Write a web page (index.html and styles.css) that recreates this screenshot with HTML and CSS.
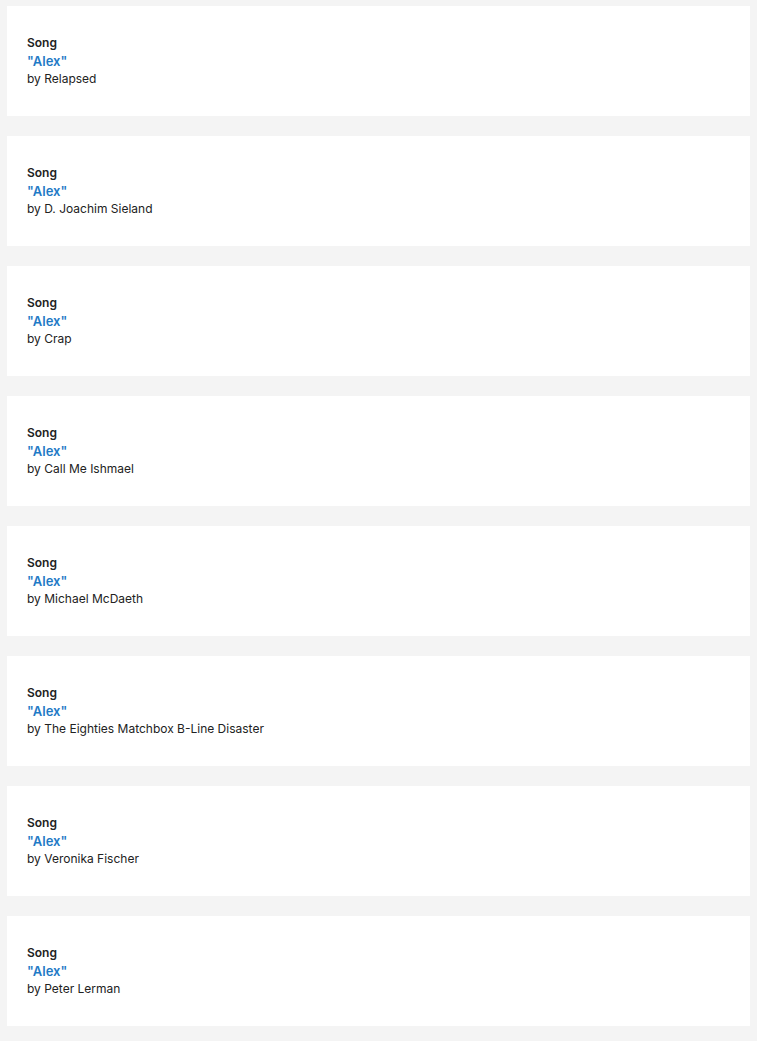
FILE: index.html
```html
<!DOCTYPE html>
<html>
<head>
<meta charset="utf-8">
<link rel="stylesheet" href="styles.css">
</head>
<body>
<div class="list">
  <div class="card"><div class="type">Song</div><div class="title">"Alex"</div><div class="artist">by Relapsed</div></div>
  <div class="card"><div class="type">Song</div><div class="title">"Alex"</div><div class="artist">by D. Joachim Sieland</div></div>
  <div class="card"><div class="type">Song</div><div class="title">"Alex"</div><div class="artist">by Crap</div></div>
  <div class="card"><div class="type">Song</div><div class="title">"Alex"</div><div class="artist">by Call Me Ishmael</div></div>
  <div class="card"><div class="type">Song</div><div class="title">"Alex"</div><div class="artist">by Michael McDaeth</div></div>
  <div class="card"><div class="type">Song</div><div class="title">"Alex"</div><div class="artist">by The Eighties Matchbox B-Line Disaster</div></div>
  <div class="card"><div class="type">Song</div><div class="title">"Alex"</div><div class="artist">by Veronika Fischer</div></div>
  <div class="card"><div class="type">Song</div><div class="title">"Alex"</div><div class="artist">by Peter Lerman</div></div>
</div>
</body>
</html>
```
FILE: styles.css
```css
html, body {
  margin: 0;
  padding: 0;
  background: #f4f4f4;
  font-family: Inter, "Noto Sans", sans-serif;
  color: #222;
}
.list {
  display: flex;
  flex-direction: column;
  gap: 20px;
  padding: 6px 7px 15px 7px;
}
.card {
  background: #fff;
  height: 110px;
  box-sizing: border-box;
  padding: 28px 20px;
  display: flex;
  flex-direction: column;
  justify-content: center;
}
.type {
  font-size: 12px;
  font-weight: 600;
  line-height: 18px;
}
.title {
  font-size: 13px;
  font-weight: 600;
  line-height: 18px;
  color: #1f7ac6;
}
.artist {
  font-size: 12px;
  line-height: 18px;
}
```
